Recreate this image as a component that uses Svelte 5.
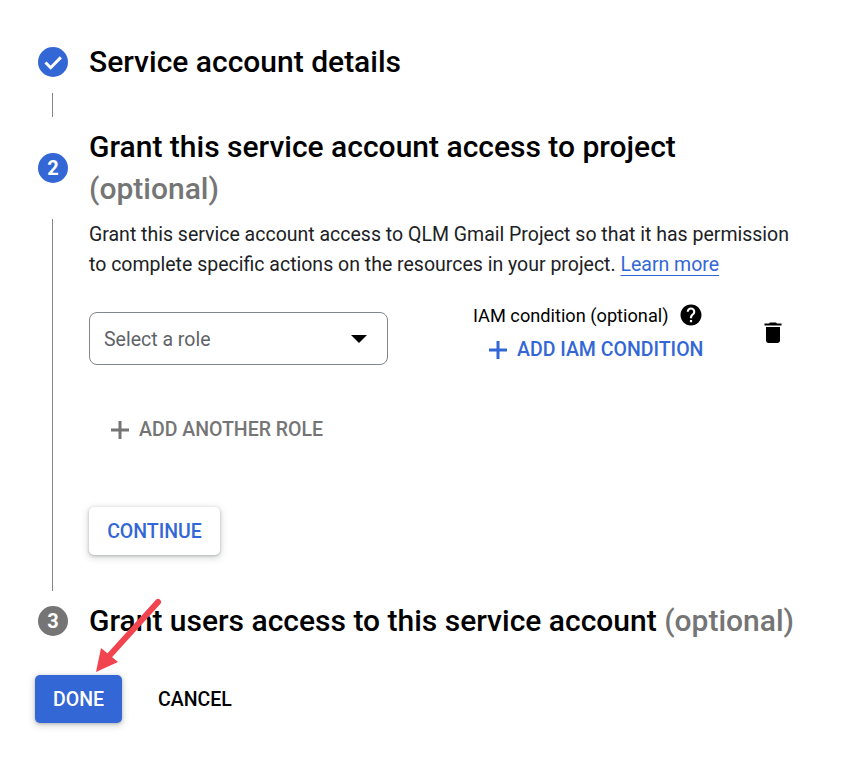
<script>
  let role = 'Select a role'
</script>

<div class="page">
  <div class="step head first">
    <div class="mark">
      <svg viewBox="0 0 30 30" width="30" height="30"><circle cx="15" cy="15" r="15" fill="#3367d6"/><path d="M7.500 15.500l5.200 5.200L22.800 10.400" fill="none" stroke="#fff" stroke-width="3"/></svg>
    </div>
    <h2>Service account details</h2>
  </div>
  <div class="rail short"><span class="line"></span></div>

  <div class="step head second">
    <div class="mark"><span class="num">2</span></div>
    <h2>Grant this service account access to project <span class="opt block">(optional)</span></h2>
  </div>

  <div class="rail body">
    <span class="line"></span>
    <div class="content">
      <p class="desc">Grant this service account access to QLM Gmail Project so that it has permission to complete specific actions on the resources in your project. <a href="#top">Learn more</a></p>

      <div class="role-row">
        <div class="select">
          <span class="placeholder">{role}</span>
          <span class="caret"></span>
        </div>
        <div class="iam">
          <div class="iam-label">
            <span>IAM condition (optional)</span>
            <svg viewBox="0 0 24 24" width="24" height="24"><path d="M12 1.500C6.200 1.500 1.500 6.200 1.500 12S6.200 22.500 12 22.500 22.500 17.800 22.500 12 17.800 1.500 12 1.500zm1.100 17.800h-2.200v-2.200h2.200v2.200zm2.300-8.100l-1 1c-.8.8-1.300 1.500-1.300 3.100h-2.200v-.6c0-1.200.5-2.300 1.300-3.100l1.400-1.400c.4-.4.600-.9.600-1.500 0-1.200-1-2.200-2.200-2.200s-2.200 1-2.200 2.200H7.700c0-2.400 1.900-4.300 4.300-4.300s4.300 1.900 4.300 4.300c0 1-.4 1.900-.9 2.500z" fill="#000"/></svg>
          </div>
          <div class="add-iam">
            <svg viewBox="0 0 20 20" width="20" height="20"><path d="M10 1v18M1 10h18" stroke="#3367d6" stroke-width="3" fill="none"/></svg>
            <span>ADD IAM CONDITION</span>
          </div>
        </div>
        <svg class="trash" viewBox="0 0 20 24" width="20" height="24"><path d="M3 7h14v13.500c0 1.400-1.100 2.500-2.500 2.500h-9C4.100 23 3 21.900 3 20.500V7zM1.500 3.500H6L7 2.500h6l1 1h4.500V5.500h-17z" fill="#000"/></svg>
      </div>

      <div class="add-role">
        <svg viewBox="0 0 20 20" width="20" height="20"><path d="M10 1v18M1 10h18" stroke="#757575" stroke-width="3" fill="none"/></svg>
        <span>ADD ANOTHER ROLE</span>
      </div>

      <button class="continue">CONTINUE</button>
    </div>
  </div>

  <div class="step head third">
    <div class="mark"><span class="num grey">3</span></div>
    <h2>Grant users access to this service account <span class="opt">(optional)</span></h2>
  </div>

  <div class="actions">
    <button class="done">DONE</button>
    <button class="cancel">CANCEL</button>
  </div>

  <svg class="arrow" viewBox="0 0 80 80" width="80" height="80"><path d="M68 5L20 58" stroke="#f1444f" stroke-width="6" stroke-linecap="round" fill="none"/><path d="M6 75l5-24 17 14z" fill="#f1444f"/></svg>
</div>

<style>
  :global(body) {
    background: #fff;
    font-family: Roboto, "Liberation Sans", sans-serif;
    color: #000;
  }
  .page {
    position: relative;
    width: 867px;
    height: 771px;
    box-sizing: border-box;
    padding: 41px 0 0 38px;
    overflow: hidden;
  }
  .step {
    display: flex;
    align-items: center;
    gap: 21px;
  }
  .mark {
    width: 30px;
    height: 30px;
    flex: none;
  }
  h2 {
    margin: 0;
    font-size: 30px;
    font-weight: 500;
    line-height: 42px;
    width: 730px;
  }
  .opt {
    color: #757575;
  }
  .block {
    display: block;
  }
  .num {
    display: flex;
    align-items: center;
    justify-content: center;
    width: 30px;
    height: 30px;
    border-radius: 50%;
    background: #3367d6;
    color: #fff;
    font-size: 20px;
    font-weight: 700;
  }
  .num.grey {
    background: #757575;
  }
  .rail {
    display: flex;
    gap: 36px;
  }
  .line {
    width: 1px;
    margin-left: 14px;
    background: #80868b;
    flex: none;
  }
  .rail.short {
    height: 24px;
    margin-top: 10px;
  }
  .second {
    margin-top: 9px;
  }
  .rail.body {
    margin-top: 9px;
    height: 372px;
  }
  .content {
    width: 720px;
  }
  .desc {
    margin: 0;
    padding-top: 1px;
    font-size: 19.5px;
    line-height: 30px;
    color: #202124;
    width: 712px;
  }
  .desc a {
    color: #3367d6;
    text-decoration: underline;
    text-underline-offset: 4px;
    text-decoration-thickness: 1px;
  }
  .role-row {
    display: flex;
    margin-top: 29px;
    align-items: flex-start;
  }
  .select {
    box-sizing: border-box;
    width: 299px;
    height: 53px;
    border: 1px solid #80868b;
    border-radius: 8px;
    display: flex;
    align-items: center;
    justify-content: space-between;
    padding: 0 20px 0 14px;
    font-size: 19.5px;
    color: #5f6368;
    margin-top: 3px;
  }
  .placeholder {
    padding-top: 2px;
  }
  .caret {
    width: 0;
    height: 0;
    border-left: 8px solid transparent;
    border-right: 8px solid transparent;
    border-top: 8px solid #000;
  }
  .iam {
    margin-left: 85px;
    width: 250px;
  }
  .iam-label {
    display: flex;
    align-items: center;
    gap: 10px;
    font-size: 18.2px;
    font-weight: 400;
    height: 24px;
    margin-top: -6px;
  }
  .add-iam {
    display: flex;
    align-items: center;
    gap: 9px;
    margin: 11px 0 0 15px;
    font-size: 19.5px;
    font-weight: 500;
    color: #3367d6;
  }
  .trash {
    margin: 11px 0 0 40px;
  }
  .add-role {
    display: flex;
    align-items: center;
    gap: 9px;
    margin: 53px 0 0 21px;
    font-size: 19.5px;
    font-weight: 500;
    color: #757575;
  }
  button {
    font-family: inherit;
    font-size: 19.5px;
    font-weight: 500;
    border: none;
    border-radius: 5px;
    cursor: pointer;
  }
  .continue {
    display: block;
    margin-top: 66px;
    width: 131px;
    height: 48px;
    background: #fff;
    color: #3367d6;
    box-shadow: 0 1px 3px rgba(60, 64, 67, .3), 0 2px 6px 2px rgba(60, 64, 67, .15);
  }
  .third {
    margin-top: 9px;
  }
  .actions {
    display: flex;
    margin: 33px 0 0 -3px;
  }
  .done {
    width: 87px;
    height: 48px;
    background: #3367d6;
    color: #fff;
    box-shadow: 0 1px 3px rgba(60, 64, 67, .3), 0 2px 6px 2px rgba(60, 64, 67, .15);
  }
  .cancel {
    width: 146px;
    height: 48px;
    background: none;
    color: #000;
  }
  .arrow {
    position: absolute;
    left: 90px;
    top: 597px;
  }
</style>
